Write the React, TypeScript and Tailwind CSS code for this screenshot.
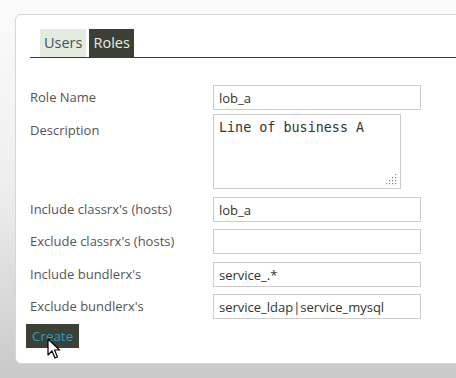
import { useState } from 'react';

const fields = [
    { label: "Include classrx's (hosts)", value: 'lob_a', mt: 'mt-[8px]' },
    { label: "Exclude classrx's (hosts)", value: '', mt: 'mt-[7px]' },
    { label: "Include bundlerx's", value: 'service_.*', mt: 'mt-[8px]' },
    { label: "Exclude bundlerx's", value: 'service_ldap|service_mysql', mt: 'mt-[7px]' },
];

function Field({ label, value, mt }: { label: string; value: string; mt: string }) {
    return (
        <div className={`flex items-center ${mt}`}>
            <label className="w-[183px] shrink-0 text-[13px] text-[#555]">{label}</label>
            <input
                defaultValue={value}
                className="w-[208px] h-[25px] border border-[#cccccc] px-[5px] text-[13px] text-[#333] outline-none bg-white"
            />
        </div>
    );
}

// dotted resize grip, drawn like the browser's
function Grip() {
    const dots = [
        [9, 1], [9, 4], [6, 4], [9, 7], [6, 7], [3, 7], [9, 10], [6, 10], [3, 10], [0, 10],
    ];
    return (
        <svg className="absolute right-[4px] bottom-[4px]" width="11" height="12" viewBox="0 0 11 12">
            {dots.map(([x, y]) => (
                <rect key={`${x}-${y}`} x={x} y={y} width="1.2" height="1.2" fill="#888" />
            ))}
        </svg>
    );
}

export default function App() {
    const [tab, setTab] = useState('roles');

    return (
        <div className="relative w-[456px] h-[378px] overflow-hidden bg-gradient-to-b from-[#fbfbfb] via-[#eeeeee] to-[#c9c9c9] font-['Open_Sans',sans-serif]">
            <div className="ml-[15px] mt-[14px] w-[470px] h-[350px] bg-white border border-[#d6d6d6] rounded-l-[6px] pl-[14px] pt-[14px]">
                {/* tabs */}
                <div className="flex items-end gap-[3px] pl-[10px] border-b border-[#3b4034]">
                    <button
                        onClick={() => setTab('users')}
                        className={tab === 'users' ? 'h-[28px] px-[4px] text-[14.5px] bg-[#3b4034] text-[#eeeee6]' : 'h-[28px] px-[4px] text-[14.5px] bg-[#e4ece0] text-[#4a5058]'}
                    >
                        Users
                    </button>
                    <button
                        onClick={() => setTab('roles')}
                        className={tab === 'roles' ? 'h-[28px] px-[4px] text-[14.5px] bg-[#3b4034] text-[#eeeee6]' : 'h-[28px] px-[4px] text-[14.5px] bg-[#e4ece0] text-[#4a5058]'}
                    >
                        Roles
                    </button>
                </div>

                <div className="mt-[27px]">
                    <div className="flex items-center">
                        <label className="w-[183px] shrink-0 text-[13px] text-[#555]">Role Name</label>
                        <input
                            defaultValue="lob_a"
                            className="w-[208px] h-[25px] border border-[#cccccc] px-[5px] text-[13px] text-[#333] outline-none bg-white"
                        />
                    </div>
                    <div className="flex items-start mt-[4px]">
                        <label className="w-[183px] shrink-0 text-[13px] text-[#555] pt-[7px]">Description</label>
                        <div className="relative">
                            <textarea
                                defaultValue="Line of business A"
                                className="block w-[188px] h-[75px] resize-none border border-[#cccccc] px-[5px] py-[3px] text-[13.4px] text-[#333] outline-none bg-white font-['DejaVu_Sans_Mono',monospace]"
                            />
                            <Grip />
                        </div>
                    </div>
                    {fields.map(f => (
                        <Field key={f.label} {...f} />
                    ))}
                    <button className="mt-[5px] -ml-[4px] h-[24px] px-[6px] bg-[#3b4135] text-[13.4px] text-[#2a9fc0]">
                        Create
                    </button>
                </div>
            </div>

            {/* mouse pointer */}
            <svg className="absolute left-[47px] top-[338px]" width="14" height="22" viewBox="0 0 14 22">
                <path d="M1 1 L1 17 L5 13 L8 20 L10.5 19 L7.5 12 L12.5 12 Z" fill="#fff" stroke="#000" strokeWidth="1.2" strokeLinejoin="round" />
            </svg>
        </div>
    );
}
